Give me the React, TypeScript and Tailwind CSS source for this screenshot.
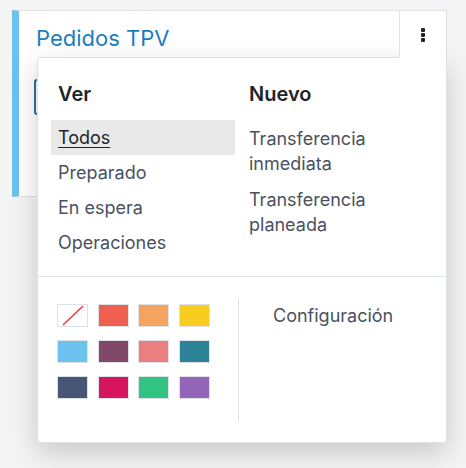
const swatches = [
  '#ffffff',
  '#f06050',
  '#f4a460',
  '#f7cd1f',
  '#6cc1ed',
  '#814968',
  '#eb7e7f',
  '#2c8397',
  '#475577',
  '#d6145f',
  '#30c381',
  '#9365b8',
];

function Dots() {
  return (
    <div className="flex flex-col gap-[1px]">
      <span className="block h-[4px] w-[4px] rounded-[1px] bg-[#212529]" />
      <span className="block h-[4px] w-[4px] rounded-[1px] bg-[#212529]" />
      <span className="block h-[4px] w-[4px] rounded-[1px] bg-[#212529]" />
    </div>
  );
}

export default function App() {
  return (
    <div className="h-[468px] w-[466px] overflow-hidden bg-[#f4f4f4] pl-[12px] pt-[10px] font-[Inter,sans-serif]">
      <div className="relative h-[187px] w-[435px] border border-l-[7px] border-[#dee2e6] border-l-[#6cc1ed] bg-white">
        {/* header */}
        <div className="flex">
          <div className="flex-1 pl-[17px] pt-[12px] text-[22px] leading-[30px] text-[#1b7fbd]">Pedidos TPV</div>
          <div className="relative z-20 flex h-[47px] w-[47px] items-center justify-center border-l border-[#dee2e6] bg-white">
            <Dots />
          </div>
        </div>
        {/* button hidden behind the menu */}
        <div className="ml-[15px] mt-[21px] h-[36px] w-[120px] rounded-[3px] border-2 border-[#2c6ea3]" />

        {/* dropdown */}
        <div className="absolute left-[18px] top-[46px] z-10 w-[410px] rounded-b-[4px] rounded-tl-[3px] border border-[#dee2e6] bg-white shadow-[0_10px_28px_rgba(0,0,0,0.18)]">
          <div className="grid grid-cols-[184px_184px] gap-x-[7px] pb-[16px] pl-[13px] pt-[24px] text-[18px] leading-[25px] text-[#4a5260]">
            <div>
              <div className="mb-[13px] px-[7px] text-[20px] font-semibold text-[#212529]">Ver</div>
              <div className="bg-[#e9e9e9] px-[7px] py-[5px] text-[#212529] underline underline-offset-[3px]">Todos</div>
              <div className="px-[7px] py-[5px]">Preparado</div>
              <div className="px-[7px] py-[5px]">En espera</div>
              <div className="px-[7px] py-[5px]">Operaciones</div>
            </div>
            <div>
              <div className="mb-[13px] px-[7px] text-[20px] font-semibold text-[#212529]">Nuevo</div>
              <div className="px-[7px] pb-[5px] pt-[6px]">Transferencia inmediata</div>
              <div className="px-[7px] pb-[5px] pt-[6px]">Transferencia planeada</div>
            </div>
          </div>
          <div className="flex border-t border-[#dee2e6] pb-[20px] pt-[21px]">
            <div className="w-[200px] pl-[19px] pt-[6px]">
              <div className="grid grid-cols-[repeat(4,31px)] gap-x-[9.6px] gap-y-[13px]">
                {swatches.map((c, i) => (
                  <div
                    key={i}
                    className="relative h-[23px] overflow-hidden border border-[#dee2e6]"
                    style={{ backgroundColor: c }}
                  >
                    {i === 0 && (
                      <svg className="absolute inset-0" width="29" height="21" viewBox="0 0 29 21">
                        <line x1="5" y1="20" x2="25" y2="1" stroke="#ff2020" strokeWidth="1.2" />
                      </svg>
                    )}
                  </div>
                ))}
              </div>
            </div>
            <div className="h-[124px] flex-1 border-l border-[#dee2e6] pl-[34px] pt-[5px] text-[18px] leading-[25px] text-[#4a5260]">
              Configuración
            </div>
          </div>
        </div>
      </div>
    </div>
  );
}
